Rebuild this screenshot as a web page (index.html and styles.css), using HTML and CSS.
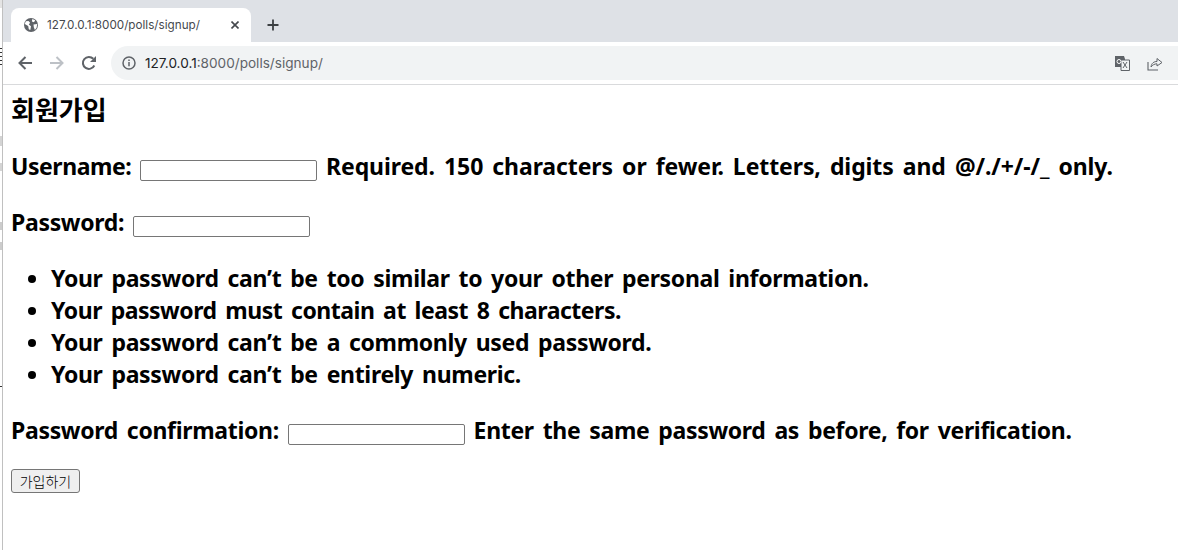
FILE: index.html
```html
<!DOCTYPE html>
<html lang="ko">
<head>
<meta charset="utf-8">
<title>Sign up</title>
<link rel="stylesheet" href="styles.css">
</head>
<body>
<div class="desk-edge">
  <span class="edge-mark edge-a"></span>
  <span class="edge-mark edge-b"></span>
  <span class="edge-mark edge-c"></span>
  <span class="edge-mark edge-d"></span>
  <span class="edge-mark edge-e"></span>
  <span class="edge-line"></span>
</div>
<div class="window">
  <header class="chrome">
    <div class="tabstrip">
      <div class="tab">
        <svg class="globe" viewBox="0 0 14 14" width="14" height="14"><circle cx="7" cy="7" r="7" fill="#5f6368"/><path d="M1.800 3.300l2.700-.3 1.600 1.700-1.300 1.800 2.200 1.700-.7 3.800-1.500-.8-.6-3.200L.8 6zM8.300 1l2.900 1.300-1.200 1.900-2.100-.8zM9.500 6.400l3.700-.4-.6 3.700-1.700 2.300-1.100-2.800z" fill="#fff"/></svg>
        <span class="tab-title">127.0.0.1:8000/polls/signup/</span>
        <svg class="tab-close" viewBox="0 0 8 8" width="8" height="8"><path d="M.5.500l7 7M7.500.500l-7 7" stroke="#45484d" stroke-width="1.600" fill="none"/></svg>
      </div>
      <svg class="new-tab" viewBox="0 0 12 12" width="12" height="12"><path d="M6 .500v11M.5 6h11" stroke="#3c4043" stroke-width="1.800"/></svg>
    </div>
    <div class="toolbar">
      <svg class="nav" viewBox="0 0 16 16" width="16" height="16"><path d="M15 8H2.500M8.500 2L2.500 8l6 6" stroke="#5f6368" stroke-width="2" fill="none"/></svg>
      <svg class="nav" viewBox="0 0 16 16" width="16" height="16"><path d="M1 8h12.500M7.500 2l6 6-6 6" stroke="#bdc1c6" stroke-width="2" fill="none"/></svg>
      <svg class="nav" viewBox="0 0 16 16" width="16" height="16"><path d="M13.300 10.500A6 6 0 1 1 12.300 3.800" stroke="#5f6368" stroke-width="2" fill="none"/><path d="M15 1v6H9z" fill="#5f6368"/></svg>
      <div class="omnibox">
        <svg class="info" viewBox="0 0 14 14" width="14" height="14"><circle cx="7" cy="7" r="6" stroke="#5f6368" stroke-width="1.500" fill="none"/><path d="M7 6v4.300M7 3.600v1.500" stroke="#5f6368" stroke-width="1.500"/></svg>
        <span class="url"><span class="host">127.0.0.1</span>:8000/polls/signup/</span>
        <span class="spacer"></span>
        <svg class="translate" viewBox="0 0 15 15" width="15" height="15"><path d="M0 0h9l1 3v8H0z" fill="#5f6368"/><path d="M6 4h8.500v10.500H6z" fill="#f1f3f4" stroke="#5f6368"/><circle cx="4" cy="5.500" r="2" fill="none" stroke="#fff"/><path d="M8 6l4 6M12 6l-4 6" stroke="#5f6368"/></svg>
        <svg class="share" viewBox="0 0 16 15" width="16" height="15"><path d="M1 6v8h10" stroke="#5f6368" stroke-width="1.100" fill="none"/><path d="M4 11c.5-4 3-5.500 6-5.500V2.500L15 6.500 10 10V7.800C7.500 7.800 5.500 9 4 11z" stroke="#5f6368" stroke-width="1" fill="none"/></svg>
      </div>
    </div>
  </header>
  <main class="page">
    <h1 class="title">회원가입</h1>
    <form class="signup">
      <p class="row"><label class="tight-label">Username:</label> <input class="field" type="text"> <span class="hint-wide">Required. 150 characters or fewer. Letters, digits and @/./+/-/_ only.</span></p>
      <p class="row"><label>Password:</label> <input class="field" type="password"></p>
      <ul class="rules">
        <li>Your password can’t be too similar to your other personal information.</li>
        <li class="rule-tight">Your password must contain at least 8 characters.</li>
        <li>Your password can’t be a commonly used password.</li>
        <li>Your password can’t be entirely numeric.</li>
      </ul>
      <p class="row row-last"><label>Password confirmation:</label> <input class="field" type="password"> <span>Enter the same password as before, for verification.</span></p>
      <button class="submit" type="button">가입하기</button>
    </form>
  </main>
</div>
</body>
</html>
```
FILE: styles.css
```css
* { box-sizing: border-box; }
html, body { margin: 0; height: 100%; overflow: hidden; background: #fff; }
body { display: flex; height: 550px; }
.desk-edge { position: relative; width: 2px; flex: none; background: #fff; }
.edge-mark { position: absolute; left: 0; width: 2px; }
.edge-a { top: 0; height: 8px; background: #e4e4e4; }
.edge-b { top: 48px; height: 18px; background: repeating-linear-gradient(#333 0 1px, #fff 1px 4px); }
.edge-c { top: 136px; height: 10px; background: #d4d4d4; }
.edge-d { top: 163px; height: 8px; background: #d4d4d4; }
.edge-e { top: 222px; height: 28px; background: repeating-linear-gradient(#ccc 0 8px, #fff 8px 20px); }
.edge-line { position: absolute; left: 0; top: 386px; width: 2px; height: 1px; background: #333; }
.window { flex: 1; min-width: 0; display: flex; flex-direction: column; border-left: 1px solid #c0c0c0; }
.chrome { flex: none; height: 85px; border-bottom: 1px solid #d9dadc; font-family: "Inter", "Liberation Sans", sans-serif; }
.tabstrip { height: 42px; background: #dee1e6; display: flex; align-items: flex-end; padding-left: 8px; }
.tab { width: 240px; height: 34px; background: #fff; border-radius: 8px 8px 0 0; display: flex; align-items: center; padding: 0 12px 0 13px; }
.globe { flex: none; }
.tab-title { margin-left: 9px; font-size: 11.700px; color: #45484d; flex: 1; white-space: nowrap; }
.tab-close { flex: none; }
.new-tab { flex: none; margin: 0 0 11px 16px; }
.toolbar { height: 42px; display: flex; align-items: center; padding-left: 14px; gap: 16px; background: #fff; }
.nav { flex: none; }
.omnibox { flex: 1; height: 34px; margin-left: -2px; background: #f1f3f4; border-radius: 17px 0 0 17px; display: flex; align-items: center; padding: 0 15px 0 11px; }
.info { flex: none; }
.url { margin-left: 9px; font-size: 13.600px; color: #5f6368; white-space: nowrap; }
.host { color: #202124; }
.spacer { flex: 1; }
.translate { flex: none; margin-right: 17px; }
.share { flex: none; }
.page { flex: 1; padding: 8px; color: #000; font-family: "Noto Sans", "Noto Sans CJK KR", sans-serif; font-weight: 700; font-size: 23px; letter-spacing: -0.32px; word-spacing: 3.200px; line-height: 32px; }
.title { margin: 0 0 25px; font-size: 26px; line-height: 32px; font-weight: 700; letter-spacing: 0; font-family: "Noto Sans CJK KR", sans-serif; }
.signup { margin: 0; }
.row { margin: 24px 0; }
.row-last { margin-bottom: 23px; }
.tight-label { letter-spacing: -0.45px; }
.hint-wide { letter-spacing: -0.09px; }
.field { width: 177px; height: 21px; border: 1px solid #767676; border-radius: 2px; background: #fff; padding: 1px 2px; vertical-align: baseline; }
.rules { margin: 24px 0; padding-left: 40px; }
.rule-tight { letter-spacing: -0.48px; }
.submit { display: block; width: 69px; height: 24px; padding: 0; border: 1px solid #767676; border-radius: 3px; background: #efefef; font-family: "Noto Sans CJK KR", sans-serif; font-size: 14px; font-weight: 300; line-height: 20px; letter-spacing: 0; word-spacing: 0; color: #000; }
```
